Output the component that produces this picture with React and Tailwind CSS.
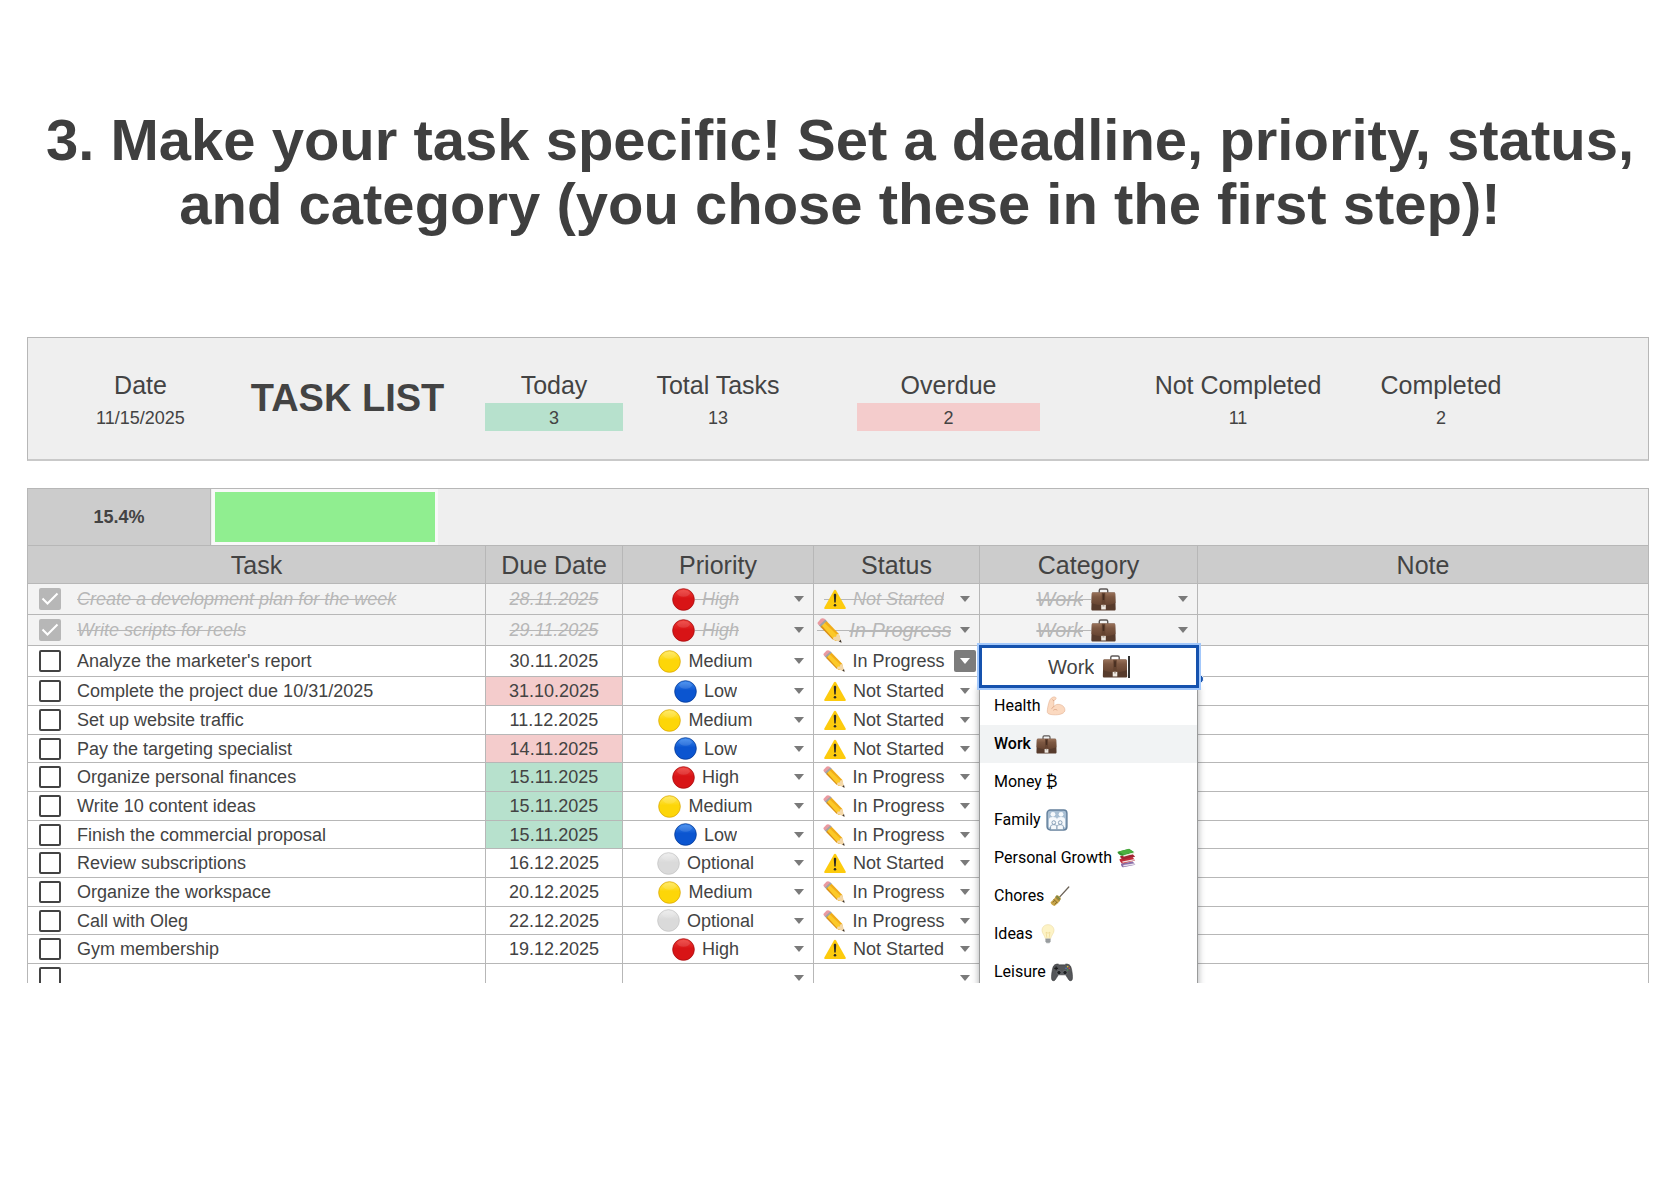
import { useState } from 'react';
import clsx from 'clsx';

const PRIORITIES = ['High', 'Medium', 'Low', 'Optional'];
const STATUSES = ['Not Started', 'In Progress', 'Done'];

const initialTasks = [
  { task: 'Create a development plan for the week', due: '28.11.2025', priority: 'High', status: 'Not Started', category: 'Work', done: true },
  { task: 'Write scripts for reels', due: '29.11.2025', priority: 'High', status: 'In Progress', category: 'Work', done: true, bigStatus: true },
  { task: "Analyze the marketer's report", due: '30.11.2025', priority: 'Medium', status: 'In Progress', category: 'Work', editing: true },
  { task: 'Complete the project due 10/31/2025', due: '31.10.2025', priority: 'Low', status: 'Not Started', flag: 'overdue' },
  { task: 'Set up website traffic', due: '11.12.2025', priority: 'Medium', status: 'Not Started' },
  { task: 'Pay the targeting specialist', due: '14.11.2025', priority: 'Low', status: 'Not Started', flag: 'overdue' },
  { task: 'Organize personal finances', due: '15.11.2025', priority: 'High', status: 'In Progress', flag: 'today' },
  { task: 'Write 10 content ideas', due: '15.11.2025', priority: 'Medium', status: 'In Progress', flag: 'today' },
  { task: 'Finish the commercial proposal', due: '15.11.2025', priority: 'Low', status: 'In Progress', flag: 'today' },
  { task: 'Review subscriptions', due: '16.12.2025', priority: 'Optional', status: 'Not Started' },
  { task: 'Organize the workspace', due: '20.12.2025', priority: 'Medium', status: 'In Progress' },
  { task: 'Call with Oleg', due: '22.12.2025', priority: 'Optional', status: 'In Progress' },
  { task: 'Gym membership', due: '19.12.2025', priority: 'High', status: 'Not Started' },
  { task: '', due: '', priority: '', status: '' },
];

const BALLS = {
  High: ['#f0403a', '#d81416', '#a50d10'],
  Medium: ['#ffe95c', '#fdd608', '#dba90b'],
  Low: ['#3d8bf0', '#0b55d0', '#073a94'],
  Optional: ['#ececec', '#dadada', '#c6c6c6'],
};

const Ball = ({ name }) => {
  const [top, mid, edge] = BALLS[name];
  return (
    <svg viewBox="0 0 24 24" className="size-[23px] shrink-0" aria-hidden="true">
      <defs>
        <linearGradient id={`ball-${name}`} x1="0" y1="0" x2="0" y2="1">
          <stop offset="0" stopColor={top} />
          <stop offset="0.45" stopColor={mid} />
          <stop offset="1" stopColor={mid} />
        </linearGradient>
      </defs>
      <circle cx="12" cy="12" r="11.300" fill={`url(#ball-${name})`} stroke={edge} strokeWidth="0.8" />
      <ellipse cx="12" cy="5.600" rx="6.600" ry="3.600" fill="#fff" opacity="0.12" />
    </svg>
  );
};

const Warning = ({ className }) => (
  <svg viewBox="0 0 24 24" className={className} aria-hidden="true">
    <path d="M12 2c.5 0 .9.300 1.200.800l10.400 18.500c.5.900.1 1.500-.8 1.500H1.200c-.9 0-1.300-.6-.8-1.500L10.800 2.800c.3-.5.7-.8 1.200-.8z" fill="#fdcb0d" />
    <path d="M10.700 8c-.1-1 .4-1.600 1.300-1.600s1.400.6 1.300 1.600l-.5 7.200c-.1.600-.3.900-.8.900s-.7-.3-.8-.9z" fill="#2b2a26" />
    <circle cx="12" cy="18.900" r="1.400" fill="#2b2a26" />
  </svg>
);

const Pencil = ({ className }) => (
  <svg viewBox="0 0 24 24" className={className} aria-hidden="true">
    <path d="M.7 4.200 3.700.8C4.700-.1 6.200 0 7.200.8l1.300 1.300-6 5.600-1.300-1.400C.5 5.500.2 4.900.7 4.200z" fill="#ea9aa0" />
    <path d="m2 7.200 6-5.700 1.900 1.800-6.100 5.800z" fill="#9fa3a6" />
    <path d="m3.400 8.700 1.900-1.900 14.300 14.400-1.400.6-3.400-1.300z" fill="#d98f14" />
    <path d="m4.700 7.500 3.200-3.100 13.700 13.200-.8 3.600-3.600.4z" fill="#fcc928" />
    <path d="m7.400 4.900 2-1.800 11.500 12 .8 3.400z" fill="#f0ac18" />
    <path d="m15 20.300 1.200-2.200 2.200-.2.500-2.200 2.100-.5 2.600 8.400z" fill="#f3d7a8" />
    <path d="m21 22.500 1.900-1.700.7 2.900z" fill="#3a3330" />
  </svg>
);

const Briefcase = ({ className }) => (
  <svg viewBox="0 0 26 24" className={className} aria-hidden="true">
    <defs>
      <linearGradient id="leather" x1="0" y1="0" x2="0" y2="1">
        <stop offset="0" stopColor="#99725a" />
        <stop offset="0.35" stopColor="#7d5842" />
        <stop offset="1" stopColor="#664431" />
      </linearGradient>
    </defs>
    <path d="M8.600 5V2.600c0-.9.600-1.500 1.500-1.500h5.800c.9 0 1.500.6 1.500 1.500V5" fill="none" stroke="#5f5a58" strokeWidth="1.500" />
    <path d="M2 4.800h22c.7 0 1.200.5 1.200 1.200l.5 15.800c0 1-.6 1.700-1.500 1.700H1.800c-.9 0-1.500-.7-1.500-1.700L.8 6c0-.7.500-1.200 1.200-1.200z" fill="#573b2c" />
    <path d="M2 4.800h22c.7 0 1.200.5 1.200 1.200l.3 9.600c-4 1.600-8 2.300-12.500 2.300S4.500 17.200.5 15.600L.8 6c0-.7.500-1.200 1.200-1.200z" fill="url(#leather)" />
    <path d="M11.200 5h3.600v13h-3.600z" fill="#644330" />
    <path d="M12.200 6.500h1.600v6h-1.600z" fill="#452d20" />
    <path d="M10.600 17.600h4.800v4.800h-4.800z" fill="#efe9e2" />
    <path d="M12 17.600h2v1.800h-2z" fill="#b5a89c" />
  </svg>
);

const Biceps = () => (
  <svg viewBox="0 0 24 24" className="size-5" aria-hidden="true">
    <path d="M7.800 1.600c1.600-.9 3.800-.5 4.200.5.500 1.100-.3 2-1.200 2.600l-1.500 1c.3 2.600.3 4.900 0 7 1.200-1.600 3-2.700 5.200-2.700 4.200 0 8 2.700 8.200 6.700.2 3.800-5.400 5.900-11.400 5.900-5 0-9.400-.8-9.700-3.100C1.200 16 3.400 6.600 5.100 4c.7-1 1.700-1.900 2.700-2.400z" fill="#fbd9c0" stroke="#e2b091" strokeWidth="0.700" />
    <path d="M9.300 12.700c-.6 1-1.400 1.700-2.300 2.200M13.200 16.800c-1.200-1-2.900-1-4 0M8 4.600l1.300 1.100" fill="none" stroke="#d59c7c" strokeWidth="0.900" strokeLinecap="round" />
  </svg>
);

const Family = () => (
  <svg viewBox="0 0 24 24" className="size-[22px]" aria-hidden="true">
    <rect x="1.200" y="1.200" width="21.600" height="21.600" rx="3.500" fill="#a9bfd3" stroke="#64809c" strokeWidth="1.600" />
    <g fill="#f6f9fc">
      <circle cx="7.600" cy="5.800" r="2.600" />
      <circle cx="16.400" cy="5.800" r="2.600" />
      <path d="M3.200 20v-8.500c0-1.800 1.700-2.700 4.400-2.700s4.400.9 4.400 2.700c0-1.800 1.700-2.700 4.400-2.700s4.400.9 4.400 2.700V20z" />
    </g>
    <g fill="#f6f9fc" stroke="#7590ab" strokeWidth="0.900">
      <path d="M5 22v-2.600c0-1.500 1.300-2.300 3.500-2.300s3.500.8 3.500 2.300V22" />
      <path d="M12 22v-2.600c0-1.500 1.300-2.300 3.500-2.300s3.500.8 3.500 2.300V22" />
      <circle cx="8.500" cy="14.800" r="2" />
      <circle cx="15.500" cy="14.800" r="2" />
    </g>
  </svg>
);

const Books = () => (
  <svg viewBox="0 0 24 24" className="size-5" aria-hidden="true">
    <path d="m5 18.500 14-2.200 3 3.700-14.500 3.200c-1.700 0-3.300-3-2.500-4.700z" fill="#8a6fa8" />
    <path d="m7.500 20.500 14-2.300.2 1.500-14 2.600z" fill="#e9e4ee" />
    <path d="m3.200 13.200 15.500-2.300 3 4-14.500 3.700c-2.200 0-4.700-3.500-4-5.400z" fill="#c22d3b" />
    <path d="m6.200 16.300 15-3 .3 1.500-14.600 3z" fill="#f0e2e0" />
    <path d="m4 9.500 15-2 2.700 3-13.800 3.200C5.600 13.700 3.400 11 4 9.500z" fill="#a32433" />
    <path d="m.8 4.400 13.700-3.600 6.300 4.400-13 4C4.500 9.500.2 6.800.8 4.400z" fill="#35932f" />
    <path d="m2.200 4.200 12.200-3 5.600 3.600-12 3.300z" fill="#4bb03f" />
    <path d="m7.600 8.700 13-3.300v1.500l-12.700 3.500z" fill="#e8f0dd" />
  </svg>
);

const Broom = () => (
  <svg viewBox="0 0 24 24" className="size-[21px]" aria-hidden="true">
    <path d="M22.600 1.200 11.500 13.300" stroke="#6b6257" strokeWidth="1.500" strokeLinecap="round" />
    <path d="M8.300 11c1-.6 2-.4 3 .4l1.500 1.500c.8.900.900 1.800.2 2.700-1.300 2.600-3.600 5-6.700 7.300-2.100-.4-3.900-2-4.600-4.300C4 16.600 6.200 14 8.300 11z" fill="#c9a649" />
    <path d="m7.300 12.400 4.800 4.600M5.200 15l4.600 4.600M4.200 18.700l2.300-2.100M6.600 21l2.300-2.500" stroke="#7d6429" strokeWidth="1" />
    <path d="M8.500 11.200 12.800 15.500" stroke="#6f8446" strokeWidth="1.500" />
  </svg>
);

const Bulb = () => (
  <svg viewBox="0 0 24 24" className="size-5" aria-hidden="true">
    <path d="M12 .8c-4.300 0-7.200 3-7.200 6.800 0 3.900 3.200 5.700 4 9.900h6.400c.8-4.200 4-6 4-9.900 0-3.800-2.900-6.800-7.200-6.800z" fill="#fdf3c6" stroke="#ecdba0" strokeWidth="0.700" />
    <path d="M10.600 16.500 9.700 9.800l2.300 1.300 2.300-1.300-.9 6.700" fill="none" stroke="#ead084" strokeWidth="0.700" />
    <path d="M9 17.500h6v3.700l-1.300 2h-3.400L9 21.200z" fill="#a9adaf" />
    <path d="M9 18.900h6M9 20.600h6" stroke="#7b7f82" strokeWidth="0.700" />
  </svg>
);

const Gamepad = () => (
  <svg viewBox="0 0 24 24" className="size-[22px]" aria-hidden="true">
    <path d="M5.500 3.600c1.500-.6 2.800-.4 3.500.6h6c.7-1 2-1.200 3.500-.6 2.200.5 3.200 2.200 3.800 5 .9 4 1.400 8 1 11-.3 2.200-2.400 2.600-3.800 1-1.400-1.700-2.500-4-3.500-5.500H8c-1 1.500-2.100 3.800-3.500 5.500-1.400 1.600-3.500 1.200-3.800-1-.4-3 .1-7 1-11 .6-2.800 1.600-4.500 3.800-5z" fill="#55575a" stroke="#2d2f31" strokeWidth="0.600" />
    <circle cx="8.700" cy="12.600" r="2.300" fill="#1e2022" stroke="#85888b" strokeWidth="0.600" />
    <circle cx="15.300" cy="12.600" r="2.300" fill="#1e2022" stroke="#85888b" strokeWidth="0.600" />
    <path d="M5.600 6v4.200M3.500 8.100h4.200" stroke="#1b1c1d" strokeWidth="1.300" />
    <circle cx="18.200" cy="6.200" r="0.900" fill="#d9b53a" />
    <circle cx="20" cy="8" r="0.900" fill="#cf4a43" />
    <circle cx="16.400" cy="8" r="0.900" fill="#4a78c4" />
    <circle cx="18.200" cy="9.800" r="0.900" fill="#4f9a55" />
  </svg>
);

const categories = [
  { name: 'Health', icon: <Biceps /> },
  { name: 'Work', icon: <Briefcase className="h-[19px] w-[21px]" /> },
  { name: 'Money ₿', icon: null },
  { name: 'Family', icon: <Family /> },
  { name: 'Personal Growth', icon: <Books /> },
  { name: 'Chores', icon: <Broom /> },
  { name: 'Ideas', icon: <Bulb /> },
  { name: 'Leisure', icon: <Gamepad /> },
];

const Caret = ({ active }) => (
  <span
    className={clsx(
      'pointer-events-none flex h-[22px] w-[22px] shrink-0 items-center justify-center rounded-xs',
      active ? 'bg-[#7c7c7c] text-white' : 'text-[#7a7a7a]'
    )}
  >
    <svg viewBox="0 0 10 6" className="h-1.5 w-2.5" fill="currentColor" aria-hidden="true">
      <path d="M0 0h10L5 6z" />
    </svg>
  </span>
);

// struck space that joins an icon to its label
const Space = ({ done }) => (
  <span className="relative px-px whitespace-pre">
    {' '}
    {done && <span className="absolute inset-x-0 top-1/2 h-px bg-[#b7b7b7]" />}
  </span>
);

const Picker = ({ label, value, options, onChange, icon, iconAfter, done, big, active }) => (
  <div className="flex items-center pr-[3px]">
    <div className={clsx('flex min-w-0 flex-1 items-center justify-center', big && 'text-[20px]')}>
      {value && !iconAfter && <>{icon}<Space done={done} /></>}
      <select
        aria-label={label}
        value={value}
        onChange={(e) => onChange(e.target.value)}
        className={clsx('field-sizing-content appearance-none outline-none', done && 'italic line-through')}
      >
        {!value && <option value=""></option>}
        {options.map((o) => <option key={o}>{o}</option>)}
      </select>
      {value && iconAfter && <><Space done={done} />{icon}</>}
    </div>
    <Caret active={active} />
  </div>
);

const StatusIcon = ({ status, done, big }) => {
  const Icon = status === 'Not Started' ? Warning : Pencil;
  return (
    <span className="relative flex shrink-0 items-center">
      {done && <span className="absolute inset-x-0 top-1/2 h-px bg-[#b7b7b7]" />}
      <Icon className={clsx('relative', big ? 'size-[25px]' : 'size-[22px]')} />
    </span>
  );
};

const CategoryEditor = ({ value, onPick }) => (
  <>
    <div className="absolute -top-px -left-px z-30 flex h-[43px] w-[220px] items-center justify-center border-3 border-[#1552ae] bg-white text-[20px] ring-2 ring-[#a3c8fb]">
      <input
        aria-label="Category"
        value={value}
        onChange={(e) => onPick(e.target.value)}
        className="field-sizing-content outline-none"
      />
      <span className="px-px whitespace-pre">{' '}</span>
      <Briefcase className="h-[23px] w-[26px]" />
      <span className="h-[22px] w-0.5 bg-[#333]" />
    </div>
    <span className="absolute top-7 -right-[7px] z-10 size-2.5 rounded-full border border-white bg-[#1552ae]" />
    <ul
      role="listbox"
      aria-label="Categories"
      className="absolute top-[41px] left-0 z-20 w-full bg-white font-[Roboto,'DejaVu_Sans',sans-serif] text-[16px] text-black shadow-[0_2px_6px_2px_rgba(60,64,67,0.35)]"
    >
      {categories.map(({ name, icon }) => (
        <li key={name} role="option" aria-selected={name === value}>
          <button
            type="button"
            onClick={() => onPick(name)}
            className={clsx(
              'flex h-[38px] w-full items-center gap-[5px] pl-3.5 text-left',
              name === value && 'bg-[#f1f3f4] font-medium'
            )}
          >
            {name}
            {icon}
          </button>
        </li>
      ))}
    </ul>
  </>
);

const Stat = ({ label, value, className, tone }) => (
  <div className={clsx('pt-0.5 text-center', className)}>
    <div className="text-[25px] leading-8 whitespace-nowrap">{label}</div>
    <div className={clsx('mt-0.5 h-7 text-[18px] leading-[30px]', tone)}>{value}</div>
  </div>
);

const App = () => {
  const [tasks, setTasks] = useState(initialTasks);

  const update = (index, patch) => {
    setTasks(tasks.map((t, i) => (i === index ? { ...t, ...patch } : t)));
  };

  const total = tasks.filter((t) => t.task).length;
  const completed = tasks.filter((t) => t.done).length;
  const percent = (completed / total) * 100;

  return (
    <main className="bg-white pb-[200px] font-['Liberation_Sans',Arial,sans-serif] text-[#434343]">
      <h1 className="pt-[108px] text-center text-[58px] leading-16 font-bold text-[#3f3f3f]">
        3. Make your task specific! Set a deadline, priority, status,
        <br />
        and category (you chose these in the first step)!
      </h1>

      <div className="mt-[101px] pr-[31px] pl-[27px]">
        <section className="grid h-[124px] grid-cols-[22fr_181fr_233fr_21fr_138fr_190fr_44fr_183fr_97fr_202fr_204fr_105fr] items-center border border-b-2 border-[#b7b7b7] border-b-[#c9c9c9] bg-[#efefef]">
          <Stat label="Date" value="11/15/2025" className="col-start-2" />
          <h2 className="text-center text-[38px] font-bold whitespace-nowrap">TASK LIST</h2>
          <Stat label="Today" value={tasks.filter((t) => t.flag === 'today').length} className="col-start-5" tone="bg-[#b7e1cd]" />
          <Stat label="Total Tasks" value={total} className="col-start-6" />
          <Stat label="Overdue" value={tasks.filter((t) => t.flag === 'overdue').length} className="col-start-8" tone="bg-[#f4cccc]" />
          <Stat label="Not Completed" value={total - completed} className="col-start-10" />
          <Stat label="Completed" value={completed} className="col-start-11" />
        </section>

        <section className="mt-[27px] max-h-[495px] overflow-hidden">
          <div className="flex h-[58px] border border-[#b7b7b7] bg-[#efefef]">
            <div className="flex w-[183px] items-center justify-center border-r border-[#b7b7b7] bg-[#ccc] text-[18px] font-bold">
              {percent.toFixed(1)}%
            </div>
            <div className="flex-1 py-[3px] pr-[3px] pl-1">
              <div className="h-full bg-[#90ee90] ring-3 ring-white/60" style={{ width: `${percent}%` }} />
            </div>
          </div>

          <table className="w-full table-fixed border-separate border-spacing-0 border-l border-[#b7b7b7] text-[18px] leading-6">
            <colgroup>
              <col className="w-[458px]" />
              <col className="w-[137px]" />
              <col className="w-[191px]" />
              <col className="w-[166px]" />
              <col className="w-[218px]" />
              <col />
            </colgroup>
            <thead>
              <tr className="h-[38px] bg-[#ccc] text-[25px] leading-8">
                {['Task', 'Due Date', 'Priority', 'Status', 'Category', 'Note'].map((h) => (
                  <th key={h} className="border-r border-b border-[#b7b7b7] p-0 font-normal">{h}</th>
                ))}
              </tr>
            </thead>
            <tbody>
              {tasks.map((t, i) => (
                <tr
                  key={i}
                  className={clsx(
                    '*:border-r *:border-b *:border-[#b7b7b7] *:p-0',
                    i < 3 ? 'h-[31px]' : 'h-[29px] nth-[3n]:h-[28px]',
                    t.done && 'bg-[#f3f3f3] text-[#b7b7b7]'
                  )}
                >
                  <td>
                    <label className="flex items-center pl-[11px]">
                      <span className="grid size-[22px] place-items-center">
                        <input
                          type="checkbox"
                          checked={!!t.done}
                          onChange={(e) => update(i, { done: e.target.checked })}
                          aria-label={t.task || 'New task'}
                          className="col-start-1 row-start-1 size-[22px] appearance-none rounded-xs border-2 border-[#434343] checked:border-[#b7b7b7] checked:bg-[#b7b7b7]"
                        />
                        {t.done && (
                          <svg viewBox="0 0 22 22" className="pointer-events-none col-start-1 row-start-1 size-[22px]" aria-hidden="true">
                            <path d="m3.500 10.500 5 5L18.500 5.500" fill="none" stroke="#fff" strokeWidth="2" />
                          </svg>
                        )}
                      </span>
                      <span className={clsx('pl-4', t.done && 'italic line-through')}>{t.task}</span>
                    </label>
                  </td>
                  <td
                    className={clsx(
                      'text-center',
                      t.done && 'italic line-through',
                      t.flag === 'overdue' && 'bg-[#f4cccc]',
                      t.flag === 'today' && 'bg-[#b7e1cd]'
                    )}
                  >
                    {t.due}
                  </td>
                  <td>
                    <Picker
                      label="Priority"
                      value={t.priority}
                      options={PRIORITIES}
                      onChange={(v) => update(i, { priority: v })}
                      icon={t.priority && <Ball name={t.priority} />}
                      done={t.done}
                    />
                  </td>
                  <td>
                    <Picker
                      label="Status"
                      value={t.status}
                      options={STATUSES}
                      onChange={(v) => update(i, { status: v })}
                      icon={<StatusIcon status={t.status} done={t.done} big={t.bigStatus} />}
                      done={t.done}
                      big={t.bigStatus}
                      active={t.editing}
                    />
                  </td>
                  <td className="relative">
                    {t.editing && <CategoryEditor value={t.category} onPick={(v) => update(i, { category: v })} />}
                    {t.done && (
                      <Picker
                        label="Category"
                        value={t.category}
                        options={categories.map((c) => c.name)}
                        onChange={(v) => update(i, { category: v })}
                        icon={<Briefcase className="h-[23px] w-[25px]" />}
                        iconAfter
                        done
                        big
                      />
                    )}
                  </td>
                  <td></td>
                </tr>
              ))}
            </tbody>
          </table>
        </section>
      </div>
    </main>
  );
};

export default App;
